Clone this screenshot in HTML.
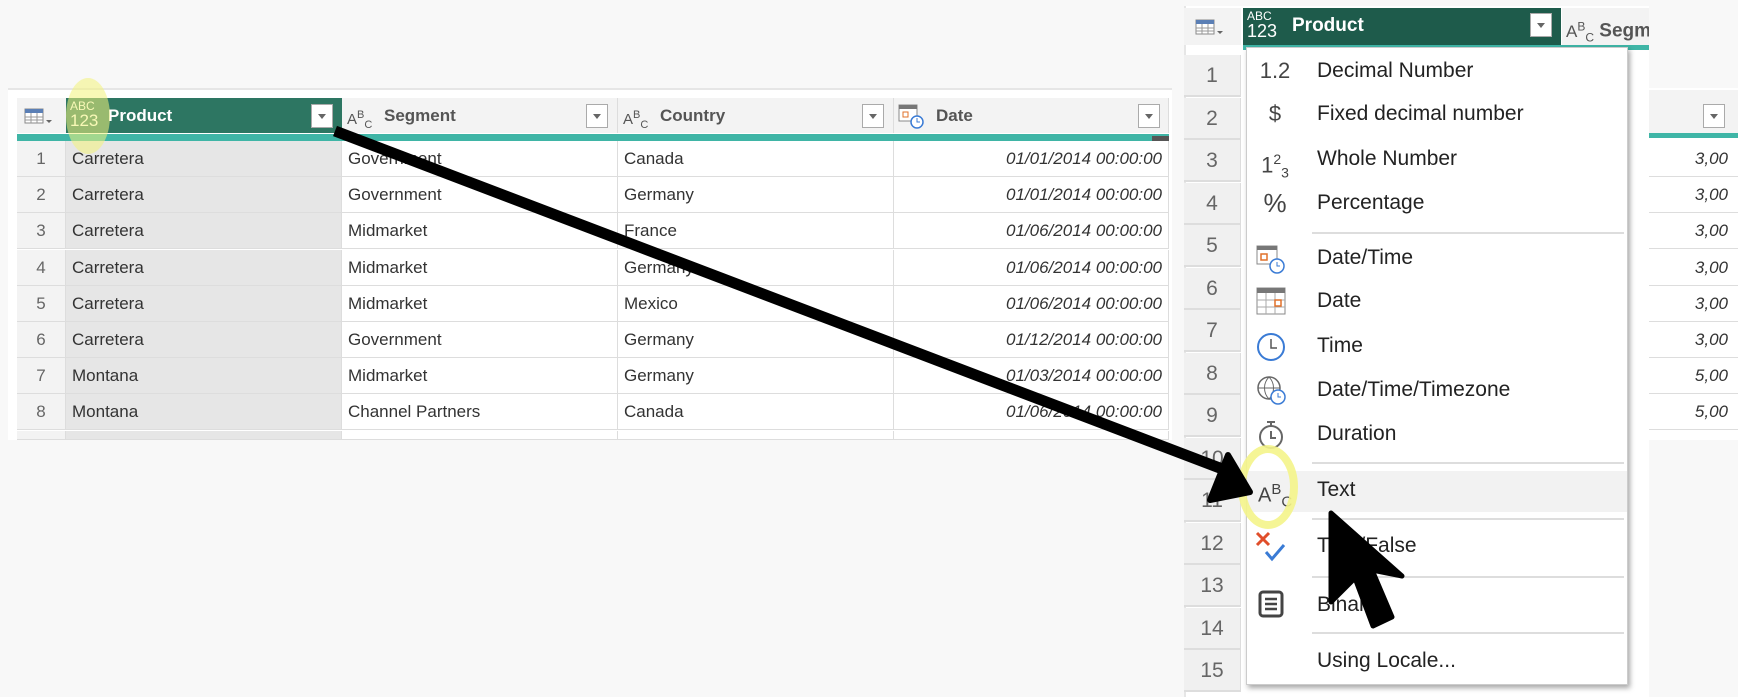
<!DOCTYPE html>
<html><head><meta charset="utf-8"><style>
*{margin:0;padding:0;box-sizing:border-box}
body{width:1738px;height:697px;background:#f8f8f8;position:relative;overflow:hidden;font-family:"Liberation Sans",sans-serif;color:#333}
.a{position:absolute}
.cell{position:absolute;font-size:17px;line-height:36px;white-space:nowrap;overflow:hidden;border-right:1px solid #ddd;border-bottom:1px solid #ddd;padding:0 6px}
.hdr{position:absolute;top:98px;height:35px;font-size:17px;font-weight:bold;color:#555;line-height:35px;background:#f3f3f3;border-right:1px solid #ddd}
.dd{position:absolute;width:22px;height:24px;background:#fff;border:1px solid #aaa;top:104px}
.dd:after{content:"";position:absolute;left:6px;top:9px;border:4px solid transparent;border-top:5px solid #666}
.mi{position:absolute;left:1317px;font-size:21px;color:#222;line-height:30px}
.ic{position:absolute;left:1258px;font-size:22px;color:#444;line-height:30px;width:34px;text-align:center}
.sep{position:absolute;left:1312px;width:312px;height:2px;background:#ddd}
.rn{position:absolute;left:1184px;width:57px;height:42px;font-size:21px;color:#666;text-align:center;line-height:42px;background:#f0f0f0;border-bottom:2px solid #ddd;border-right:1px solid #ddd}
</style></head><body>
<!-- left panel -->
<div class="a" style="left:8px;top:88px;width:1164px;height:352px;background:#fff;border-top:2px solid #e6e6e6"></div>
<div class="a" style="left:17px;top:98px;width:1152px;height:35px;background:#f3f3f3"></div>
<div class="a" style="left:17px;top:98px;width:49px;height:35px"><svg width="49" height="35"><rect x="8" y="11" width="18" height="14" fill="#fff" stroke="#888"/><rect x="8" y="11" width="18" height="4" fill="#5b7fb5"/><path d="M8 19H26M8 22H26M14 15V25M20 15V25" stroke="#999"/><path d="M29 22l3 3 3-3z" fill="#666"/></svg></div>
<div class="a" style="left:66px;top:98px;width:276px;height:35px;background:#2d7662"></div>
<div class="a" style="left:70px;top:100px;color:#fff;font-size:12px;line-height:12px">ABC<br><span style="font-size:17px;line-height:18px">123</span></div>
<div class="a" style="left:108px;top:98px;color:#fff;font-weight:bold;font-size:17px;line-height:35px">Product</div>
<div class="dd" style="left:311px"></div>
<div class="hdr" style="left:342px;width:276px"><span style="position:absolute;left:5px;font-size:15px;font-weight:normal">A<sup style="font-size:11px">B</sup><sub style="font-size:11px">C</sub></span><span style="position:absolute;left:42px">Segment</span></div>
<div class="dd" style="left:586px"></div>
<div class="hdr" style="left:618px;width:276px"><span style="position:absolute;left:5px;font-size:15px;font-weight:normal">A<sup style="font-size:11px">B</sup><sub style="font-size:11px">C</sub></span><span style="position:absolute;left:42px">Country</span></div>
<div class="dd" style="left:862px"></div>
<div class="hdr" style="left:894px;width:275px"><svg class="a" style="left:4px;top:6px" width="28" height="26"><rect x="1" y="1" width="18" height="16" fill="#fff" stroke="#888"/><rect x="1" y="1" width="18" height="4" fill="#777"/><rect x="5" y="8" width="5" height="5" fill="none" stroke="#e0702a"/><circle cx="19" cy="18" r="6" fill="#fff" stroke="#3a7bd5" stroke-width="1.5"/><path d="M19 14v4h3" stroke="#3a7bd5" fill="none"/></svg><span style="position:absolute;left:42px">Date</span></div>
<div class="dd" style="left:1138px"></div>
<div class="a" style="left:17px;top:134px;width:1152px;height:7px;background:#3fb5a6"></div>
<div class="a" style="left:1152px;top:136px;width:17px;height:5px;background:#555"></div>
<div id="rows"></div>
<!-- far right partial table -->
<div class="a" style="left:1649px;top:88px;width:89px;height:352px;background:#fff"></div>
<div class="a" style="left:1649px;top:90px;width:89px;height:43px;background:#f3f3f3"></div>
<div class="dd" style="left:1703px;top:104px"></div>
<div class="a" style="left:1649px;top:133px;width:89px;height:5px;background:#3fb5a6"></div>
<!-- right panel -->
<div class="a" style="left:1184px;top:6px;width:465px;height:691px;background:#fff;border-left:2px solid #e6e6e6"></div>
<div class="a" style="left:1184px;top:8px;width:57px;height:37px;background:#f3f3f3"><svg width="57" height="37"><rect x="12" y="12" width="18" height="14" fill="#fff" stroke="#888"/><rect x="12" y="12" width="18" height="4" fill="#5b7fb5"/><path d="M12 20H30M12 23H30M18 16V26M24 16V26" stroke="#999"/><path d="M33 23l3 3 3-3z" fill="#666"/></svg></div>
<div class="a" style="left:1243px;top:8px;width:318px;height:37px;background:#1e5b4b"></div>
<div class="a" style="left:1247px;top:10px;color:#fff;font-size:12px;line-height:12px">ABC<br><span style="font-size:18px;line-height:19px">123</span></div>
<div class="a" style="left:1292px;top:8px;color:#fff;font-weight:bold;font-size:19px;line-height:36px">Product</div>
<div class="dd" style="left:1530px;top:13px"></div>
<div class="a" style="left:1562px;top:8px;width:87px;height:37px;background:#f3f3f3;font-size:19px;font-weight:bold;color:#555;line-height:36px;overflow:hidden;white-space:nowrap"><span style="font-weight:normal;font-size:17px;margin-left:4px">A<sup style="font-size:12px">B</sup><sub style="font-size:12px">C</sub></span> Segment</div>
<div class="a" style="left:1243px;top:45px;width:406px;height:5px;background:#3fb5a6"></div>
<div id="rrows"></div>
<!-- menu -->
<div class="a" style="left:1246px;top:47px;width:382px;height:638px;background:#fff;box-shadow:2px 3px 5px rgba(0,0,0,.35);border:1px solid #ccc"></div>
<div class="a" style="left:1247px;top:471px;width:380px;height:41px;background:#f2f2f2"></div>
<div class="ic" style="top:56px">1.2</div><div class="mi" style="top:56px">Decimal Number</div>
<div class="ic" style="top:99px">$</div><div class="mi" style="top:99px">Fixed decimal number</div>
<div class="ic" style="top:144px">1<sup style="font-size:14px">2</sup><sub style="font-size:14px">3</sub></div><div class="mi" style="top:144px">Whole Number</div>
<div class="ic" style="top:188px;font-size:26px">%</div><div class="mi" style="top:188px">Percentage</div>
<div class="sep" style="top:232px"></div>
<svg class="a" style="left:1256px;top:245px" width="34" height="32"><rect x="1" y="1" width="20" height="18" fill="#fff" stroke="#888"/><rect x="1" y="1" width="20" height="4" fill="#777"/><rect x="5" y="9" width="6" height="6" fill="none" stroke="#e0702a" stroke-width="1.5"/><circle cx="21" cy="21" r="7" fill="#fff" stroke="#3a7bd5" stroke-width="1.5"/><path d="M21 17v4h3" stroke="#3a7bd5" fill="none"/></svg>
<div class="mi" style="top:243px">Date/Time</div>
<svg class="a" style="left:1256px;top:287px" width="34" height="32"><rect x="1" y="1" width="28" height="26" fill="#fff" stroke="#888"/><rect x="1" y="1" width="28" height="5" fill="#777"/><path d="M1 13H29M1 20H29M10 6V27M19 6V27" stroke="#aaa"/><rect x="19" y="13" width="6" height="6" fill="none" stroke="#e0702a" stroke-width="1.5"/></svg>
<div class="mi" style="top:286px">Date</div>
<svg class="a" style="left:1256px;top:331px" width="34" height="32"><circle cx="15" cy="16" r="13" fill="#fff" stroke="#3a7bd5" stroke-width="2"/><path d="M15 8v9h6" stroke="#555" stroke-width="1.5" fill="none"/></svg>
<div class="mi" style="top:331px">Time</div>
<svg class="a" style="left:1256px;top:375px" width="34" height="32"><circle cx="13" cy="13" r="11" fill="none" stroke="#666" stroke-width="1.5"/><path d="M2 13H24M13 2C7 8 7 18 13 24M13 2C19 8 19 18 13 24" stroke="#666" fill="none"/><circle cx="22" cy="22" r="7" fill="#fff" stroke="#3a7bd5" stroke-width="1.5"/><path d="M22 18v4h3" stroke="#3a7bd5" fill="none"/></svg>
<div class="mi" style="top:375px">Date/Time/Timezone</div>
<svg class="a" style="left:1258px;top:418px" width="34" height="34"><circle cx="13" cy="19" r="11" fill="none" stroke="#666" stroke-width="2"/><path d="M9 4h8M13 4v4M13 13v7h5" stroke="#666" stroke-width="2" fill="none"/></svg>
<div class="mi" style="top:419px">Duration</div>
<div class="sep" style="top:462px"></div>
<div class="ic" style="top:475px;font-size:20px">A<sup style="font-size:15px">B</sup><sub style="font-size:15px">C</sub></div><div class="mi" style="top:475px">Text</div>
<div class="sep" style="top:518px"></div>
<svg class="a" style="left:1254px;top:530px" width="36" height="34"><path d="M3 3l12 12M15 3L3 15" stroke="#e04e2a" stroke-width="3"/><path d="M12 22l6 7 12-14" stroke="#3a7bd5" stroke-width="3" fill="none"/></svg>
<div class="mi" style="top:531px">True/False</div>
<div class="sep" style="top:576px"></div>
<svg class="a" style="left:1258px;top:590px" width="30" height="30"><rect x="2" y="2" width="22" height="24" rx="3" fill="none" stroke="#444" stroke-width="3"/><path d="M7 9h12M7 14h12M7 19h12" stroke="#444" stroke-width="2.5"/></svg>
<div class="mi" style="top:590px">Binary</div>
<div class="sep" style="top:632px"></div>
<div class="mi" style="top:646px">Using Locale...</div>
<!-- annotations -->
<svg class="a" style="left:0;top:0" width="1738" height="697">
<ellipse cx="88" cy="116" rx="22" ry="38" fill="#f2f27a" opacity=".55"/>
<ellipse cx="1268" cy="487" rx="26" ry="38" fill="none" stroke="#f4f48a" stroke-width="8" opacity=".9"/>
<path d="M335 131L1225 470" stroke="#000" stroke-width="11"/>
<path d="M1228 455L1250 492L1210 500Z" fill="#000" stroke="#000" stroke-width="6" stroke-linejoin="round"/>
<path d="M1331 513L1331 602L1355 578L1373 626L1392 617L1372 570L1402 576Z" fill="#000" stroke="#000" stroke-width="5" stroke-linejoin="round"/>
</svg>
<script>
var d=[["Carretera","Government","Canada","01/01/2014 00:00:00"],["Carretera","Government","Germany","01/01/2014 00:00:00"],["Carretera","Midmarket","France","01/06/2014 00:00:00"],["Carretera","Midmarket","Germany","01/06/2014 00:00:00"],["Carretera","Midmarket","Mexico","01/06/2014 00:00:00"],["Carretera","Government","Germany","01/12/2014 00:00:00"],["Montana","Midmarket","Germany","01/03/2014 00:00:00"],["Montana","Channel Partners","Canada","01/06/2014 00:00:00"],["","","",""]];
var h="";
for(var i=0;i<9;i++){var t=141+i*36.2;var hh=i==8?440-t:36;
h+='<div class="cell" style="left:17px;top:'+t+'px;width:49px;height:'+hh+'px;background:#f3f3f3;text-align:center;color:#666">'+(i<8?i+1:"")+'</div>';
h+='<div class="cell" style="left:66px;top:'+t+'px;width:276px;height:'+hh+'px;background:#e6e6e6">'+d[i][0]+'</div>';
h+='<div class="cell" style="left:342px;top:'+t+'px;width:276px;height:'+hh+'px">'+d[i][1]+'</div>';
h+='<div class="cell" style="left:618px;top:'+t+'px;width:276px;height:'+hh+'px">'+d[i][2]+'</div>';
h+='<div class="cell" style="left:894px;top:'+t+'px;width:275px;height:'+hh+'px;text-align:right;font-style:italic">'+d[i][3]+'</div>';}
document.getElementById("rows").innerHTML=h;
var v=["3,00","3,00","3,00","3,00","3,00","3,00","5,00","5,00"];var r="";
for(var k=0;k<8;k++){var tt=141+k*36.2;r+='<div class="cell" style="left:1649px;top:'+tt+'px;width:89px;height:36px;text-align:right;font-style:italic;border-right:none;padding-right:10px">'+v[k]+'</div>';}
for(var j=0;j<15;j++){r+='<div class="rn" style="top:'+(55+j*42.5)+'px">'+(j+1)+'</div>';}
document.getElementById("rrows").innerHTML=r;
</script>
</body></html>
